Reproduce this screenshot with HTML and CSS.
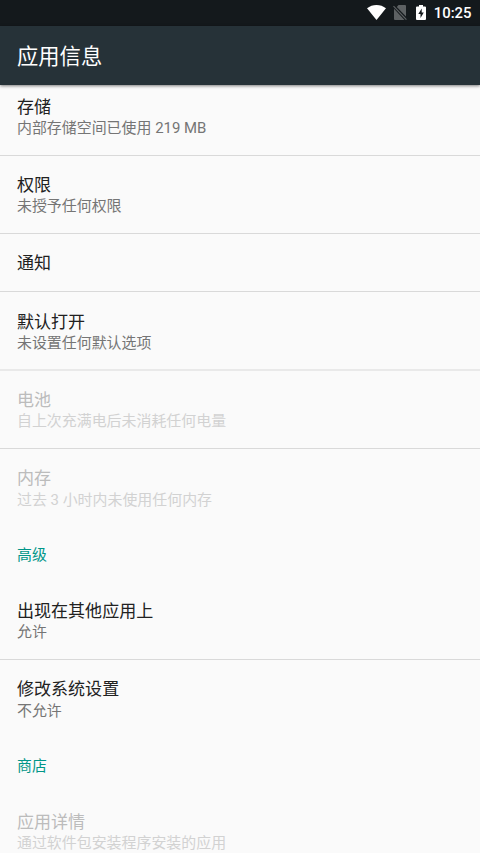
FILE: index.html
```html
<!DOCTYPE html>
<html lang="zh-CN">
<head>
<meta charset="utf-8">
<title>应用信息</title>
<link rel="stylesheet" href="styles.css">
</head>
<body>
<div class="screen">
  <div class="status">
    <svg class="wifi" viewBox="0 0 19 15"><path d="M9.500 15 0 3.300C2.700 1.200 6 0 9.500 0S16.300 1.200 19 3.300z" fill="#fff"/></svg>
    <svg class="sim" viewBox="0 0 14 15"><path d="M5.500 0H12q1 0 1 1v10.600L3.800 2z" fill="#5d6163"/><path d="M1 3.800 11.500 15H2q-1 0-1-1z" fill="#5d6163"/><path d="M.5 1.200 13.400 14.600" stroke="#5d6163" stroke-width="1.200"/></svg>
    <svg class="battery" viewBox="0 0 10 15"><path fill="#fff" fill-rule="evenodd" d="M3 0h4v1.500h2q1 0 1 1V14q0 1-1 1H1q-1 0-1-1V2.500q0-1 1-1h2zM5.700 3.500 2.300 9h2.200v4L7.800 7.500H5.700z"/></svg>
    <span class="clock">10:25</span>
  </div>
  <header class="bar"><h1>应用信息</h1></header>
  <main class="list">
    <section class="item first"><h2>存储</h2><p>内部存储空间已使用 219 MB</p></section>
    <section class="item compact"><h2>权限</h2><p>未授予任何权限</p></section>
    <section class="item single compact"><h2>通知</h2></section>
    <section class="item tall soft"><h2>默认打开</h2><p>未设置任何默认选项</p></section>
    <section class="item compact disabled"><h2>电池</h2><p>自上次充满电后未消耗任何电量</p></section>
    <section class="item compact roomy disabled last"><h2>内存</h2><p>过去 3 小时内未使用任何内存</p></section>
    <h3 class="category">高级</h3>
    <section class="item tall"><h2>出现在其他应用上</h2><p>允许</p></section>
    <section class="item compact roomy last"><h2>修改系统设置</h2><p>不允许</p></section>
    <h3 class="category">商店</h3>
    <section class="item disabled last"><h2>应用详情</h2><p>通过软件包安装程序安装的应用</p></section>
  </main>
</div>
</body>
</html>
```
FILE: styles.css
```css
* { box-sizing: border-box; margin: 0; padding: 0; font-weight: 400; }
body { font-family: Roboto, "Noto Sans CJK SC", sans-serif; background: #fafafa; }
.screen { width: 480px; height: 853px; overflow: hidden; display: flex; flex-direction: column; }
.status { height: 26px; flex: none; background: #14191c; display: flex; align-items: center; justify-content: flex-end; padding-right: 8.500px; color: #fff; }
.status svg { height: 15px; margin-bottom: 1px; }
.wifi { width: 19px; margin-right: 7px; }
.sim { width: 14px; margin-right: 9px; }
.battery { width: 10px; margin-right: 8px; }
.clock { font-size: 14.900px; font-weight: 500; line-height: 27px; }
.bar { height: 59px; flex: none; background: #263238; color: #fff; padding-left: 17px; box-shadow: 0 1px 3px rgba(0,0,0,.5); z-index: 1; }
.bar h1 { font-size: 21.300px; line-height: 62px; }
.list { flex: 1; min-height: 0; overflow: hidden; }
.item { height: 78px; padding: 18px 17px 0; border-bottom: 1px solid #d9d9d9; color: #212121; }
.item h2 { font-size: 17.050px; line-height: 24px; }
.item p { font-size: 14.940px; line-height: 20px; margin-top: -1px; color: #757575; }
.item.compact { padding-top: 17px; }
.item.roomy p { margin-top: 0; }
.item.first { height: 71px; padding-top: 10px; }
.item.single { height: 58px; }
.item.tall { height: 79px; }
.item.soft { border-bottom: 2px solid #e9e9e9; }
.item.last { border-bottom-color: transparent; }
.item.disabled h2 { color: #bcbcbc; }
.item.disabled p { color: #d2d2d2; }
.category { height: 54px; padding: 18px 17px 0; font-size: 14.920px; line-height: 20px; color: #009688; }
```
